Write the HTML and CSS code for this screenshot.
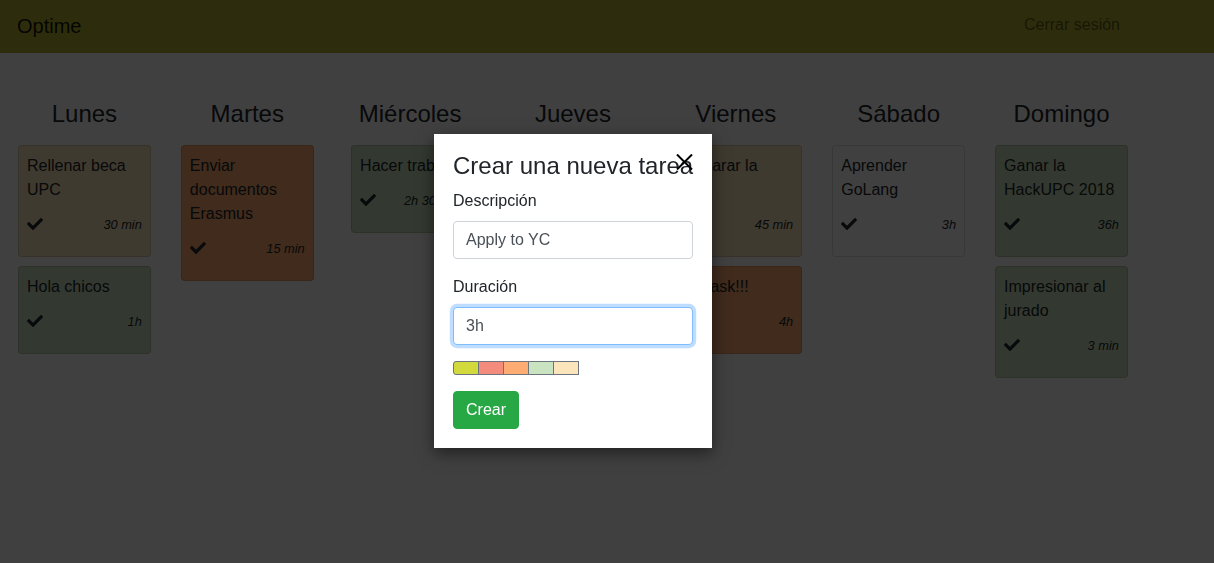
FILE: index.html
```html
<!DOCTYPE html>
<html lang="es">
<head>
<meta charset="utf-8">
<title>Optime</title>
<link rel="stylesheet" href="styles.css">
</head>
<body>
<svg width="0" height="0" class="defs" aria-hidden="true">
  <symbol id="check" viewBox="0 0 512 512"><path d="M173.898 439.404l-166.4-166.4c-9.997-9.997-9.997-26.206 0-36.204l36.203-36.204c9.997-9.998 26.207-9.998 36.204 0L192 312.69 432.095 72.596c9.997-9.997 26.207-9.997 36.204 0l36.203 36.204c9.997 9.997 9.997 26.206 0 36.204l-294.4 294.401c-9.998 9.997-26.207 9.997-36.204-.001z"/></symbol>
</svg>

<nav class="navbar">
  <a class="brand">Optime</a>
  <a class="nav-link">Cerrar sesión</a>
</nav>

<main class="week">
  <section class="day">
    <h4 class="day-title">Lunes</h4>
    <div class="task tan">
      <p class="task-text">Rellenar beca UPC</p>
      <div class="task-foot"><svg class="check"><use href="#check"/></svg><span class="dur">30 min</span></div>
    </div>
    <div class="task green">
      <p class="task-text">Hola chicos</p>
      <div class="task-foot"><svg class="check"><use href="#check"/></svg><span class="dur">1h</span></div>
    </div>
  </section>

  <section class="day">
    <h4 class="day-title">Martes</h4>
    <div class="task orange">
      <p class="task-text">Enviar documentos Erasmus</p>
      <div class="task-foot"><svg class="check"><use href="#check"/></svg><span class="dur">15 min</span></div>
    </div>
  </section>

  <section class="day">
    <h4 class="day-title">Miércoles</h4>
    <div class="task green narrow">
      <p class="task-text">Hacer trabajo</p>
      <div class="task-foot"><svg class="check"><use href="#check"/></svg><span class="dur">2h 30 min</span></div>
    </div>
  </section>

  <section class="day">
    <h4 class="day-title">Jueves</h4>
  </section>

  <section class="day">
    <h4 class="day-title">Viernes</h4>
    <div class="task tan">
      <p class="task-text">Preparar la idea.</p>
      <div class="task-foot"><svg class="check"><use href="#check"/></svg><span class="dur">45 min</span></div>
    </div>
    <div class="task orange">
      <p class="task-text">Big task!!!</p>
      <div class="task-foot"><svg class="check"><use href="#check"/></svg><span class="dur">4h</span></div>
    </div>
  </section>

  <section class="day">
    <h4 class="day-title">Sábado</h4>
    <div class="task white">
      <p class="task-text">Aprender GoLang</p>
      <div class="task-foot"><svg class="check"><use href="#check"/></svg><span class="dur">3h</span></div>
    </div>
  </section>

  <section class="day">
    <h4 class="day-title">Domingo</h4>
    <div class="task green">
      <p class="task-text">Ganar la HackUPC 2018</p>
      <div class="task-foot"><svg class="check"><use href="#check"/></svg><span class="dur">36h</span></div>
    </div>
    <div class="task green">
      <p class="task-text">Impresionar al jurado</p>
      <div class="task-foot"><svg class="check"><use href="#check"/></svg><span class="dur">3 min</span></div>
    </div>
  </section>
</main>

<div class="backdrop"></div>

<div class="modal">
  <h4 class="modal-title">Crear una nueva tarea</h4>
  <svg class="close" viewBox="0 0 17 16" aria-label="Cerrar"><path d="M1 0.5 L16 15.5 M16 0.5 L1 15.5" /></svg>
  <div class="form-group">
    <label class="label">Descripción</label>
    <input class="form-control" type="text" value="Apply to YC">
  </div>
  <div class="form-group">
    <label class="label">Duración</label>
    <input class="form-control focused" type="text" value="3h">
  </div>
  <div class="swatches">
    <span class="swatch sw-lime"></span>
    <span class="swatch sw-salmon"></span>
    <span class="swatch sw-orange"></span>
    <span class="swatch sw-green"></span>
    <span class="swatch sw-tan"></span>
  </div>
  <button class="btn-success">Crear</button>
</div>
</body>
</html>
```

FILE: styles.css
```css
* { box-sizing: border-box; }

html, body {
  margin: 0;
  background: #fff;
  color: #212529;
  font-family: "Liberation Sans", Arial, Helvetica, sans-serif;
  font-size: 16px;
  line-height: 1.5;
}

.defs { position: absolute; width: 0; height: 0; overflow: hidden; }

.navbar {
  display: flex;
  align-items: flex-start;
  height: 53px;
  padding: 0 16px 0 17px;
  background: #b4b434;
}

.brand {
  padding-top: 11px;
  font-size: 20px;
  line-height: 30px;
  color: rgba(0, 0, 0, .9);
}

.nav-link {
  margin-left: auto;
  margin-right: 78px;
  padding-top: 13px;
  font-size: 16px;
  line-height: 24px;
  color: rgba(0, 0, 0, .5);
}

.week {
  display: grid;
  grid-template-columns: repeat(7, 162.857px);
  padding: 47px 0 0 3px;
}

.day { padding: 0 15px; }

.day-title {
  margin: 0 0 16px;
  font-size: 24px;
  font-weight: 500;
  line-height: 1.2;
  text-align: center;
}

.task {
  border: 1px solid rgba(0, 0, 0, .125);
  border-radius: 4px;
  padding: 8px;
  margin-bottom: 9px;
}

.task.narrow { width: 118px; margin-left: auto; margin-right: auto; }

.tan { background: #fbe5bd; }
.green { background: #cae3c0; }
.orange { background: #fdac73; }
.white { background: #fff; }

.task-text {
  margin: 0 0 10px;
  line-height: 24px;
}

.task-foot {
  display: flex;
  align-items: center;
  justify-content: space-between;
  height: 25px;
  margin-bottom: 11px;
}

.check { width: 16px; height: 16px; fill: #212529; }

.dur {
  font-size: 12.8px;
  font-style: italic;
  line-height: 1.5;
}

.backdrop {
  position: fixed;
  inset: 0;
  background: rgba(0, 0, 0, .75);
}

.modal {
  position: absolute;
  left: 434px;
  top: 134px;
  width: 278px;
  padding: 18px 19px 19px;
  background: #fff;
  box-shadow: 0 5px 15px rgba(0, 0, 0, .5);
}

.close {
  position: absolute;
  left: 242px;
  top: 20px;
  width: 17px;
  height: 16px;
  stroke: #000;
  stroke-width: 2;
  fill: none;
}

.modal-title {
  margin: 0 0 8px;
  font-size: 24px;
  font-weight: 500;
  line-height: 1.2;
  white-space: nowrap;
}

.form-group { margin-bottom: 16px; }

.label {
  display: block;
  margin-bottom: 8px;
  line-height: 24px;
}

.form-control {
  display: block;
  width: 100%;
  height: 38px;
  padding: 6px 12px;
  font-family: inherit;
  font-size: 16px;
  line-height: 1.5;
  color: #495057;
  background: #fff;
  border: 1px solid #ced4da;
  border-radius: 4px;
  outline: none;
}

.form-control.focused {
  border-color: #80bdff;
  box-shadow: 0 0 0 3.2px rgba(0, 123, 255, .25);
}

.swatches {
  display: flex;
  margin-bottom: 16px;
}

.swatch {
  width: 26px;
  height: 14px;
  border: 1px solid #6c757d;
}

.swatch + .swatch { margin-left: -1px; }
.swatch:first-child { border-radius: 3px 0 0 3px; }

.sw-lime { background: #d1d93d; }
.sw-salmon { background: #f38c7c; }
.sw-orange { background: #fdad74; }
.sw-green { background: #cae3c0; }
.sw-tan { background: #fce5bd; }

.btn-success {
  display: block;
  height: 38px;
  padding: 6px 12px;
  font-family: inherit;
  font-size: 16px;
  line-height: 1.5;
  color: #fff;
  background: #28a745;
  border: 1px solid #28a745;
  border-radius: 4px;
}
```
